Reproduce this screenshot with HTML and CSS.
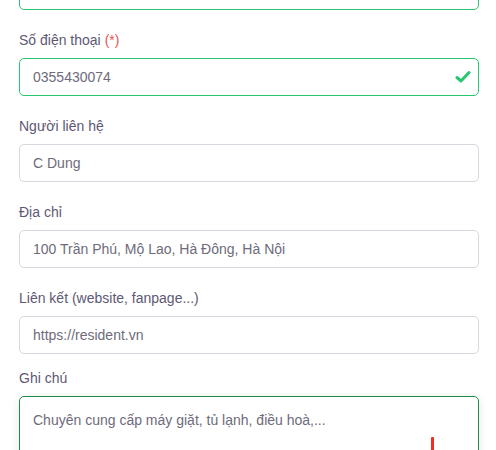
FILE: index.html
```html
<!DOCTYPE html>
<html lang="vi">
<head>
<meta charset="utf-8">
<link rel="stylesheet" href="styles.css">
</head>
<body>
<form class="form">
  <div class="group group-first">
    <input class="control control-valid" type="text" value="Công ty TNHH Resident">
  </div>
  <div class="group">
    <label class="label">Số điện thoại <span class="req">(*)</span></label>
    <div class="field">
      <input class="control control-valid" type="text" value="0355430074">
      <svg class="check" width="16" height="14" viewBox="0 0 16 14"><path d="M2 7.5 L6 11 L14 2.5" fill="none" stroke="#28c76f" stroke-width="3" stroke-linecap="round" stroke-linejoin="round"/></svg>
    </div>
  </div>
  <div class="group">
    <label class="label">Người liên hệ</label>
    <input class="control" type="text" value="C Dung">
  </div>
  <div class="group">
    <label class="label">Địa chỉ</label>
    <input class="control" type="text" value="100 Trần Phú, Mộ Lao, Hà Đông, Hà Nội">
  </div>
  <div class="group group-tight">
    <label class="label">Liên kết (website, fanpage...)</label>
    <input class="control" type="text" value="https://resident.vn">
  </div>
  <div class="group">
    <label class="label">Ghi chú</label>
    <div class="field">
      <textarea class="control area" rows="4">Chuyên cung cấp máy giặt, tủ lạnh, điều hoà,...</textarea>
      <span class="mark"></span>
    </div>
  </div>
</form>
</body>
</html>
```
FILE: styles.css
```css
html, body {
  margin: 0;
  padding: 0;
  background: #fff;
}
body {
  font-family: "Liberation Sans", Arial, sans-serif;
  font-size: 14px;
  overflow: hidden;
}
.form {
  margin-top: -28px;
  padding: 0 17px 0 19px;
}
.group {
  margin-bottom: 20px;
}
.group-tight {
  margin-bottom: 14px;
}
.label {
  display: block;
  color: #5e5873;
  line-height: 20px;
  margin-bottom: 8px;
}
.req {
  color: #ea5455;
}
.field {
  position: relative;
}
.control {
  display: block;
  box-sizing: border-box;
  width: 460px;
  height: 38px;
  margin: 0;
  padding: 0 13px;
  border: 1px solid #d8d6de;
  border-radius: 5px;
  background: #fff;
  color: #6e6b7b;
  font-family: "Liberation Sans", Arial, sans-serif;
  font-size: 14px;
  line-height: 20px;
  outline: none;
}
.control-valid {
  border-color: #28c76f;
}
.check {
  position: absolute;
  right: 8px;
  top: 12px;
}
.area {
  height: 120px;
  padding: 13px 13px;
  resize: none;
  border-color: #1e8a4a;
  box-shadow: 0 3px 10px 0 rgba(34, 41, 47, 0.12);
}
.mark {
  position: absolute;
  left: 412px;
  top: 41px;
  width: 3px;
  height: 20px;
  background: #f0301e;
  border-radius: 1px;
}
```
